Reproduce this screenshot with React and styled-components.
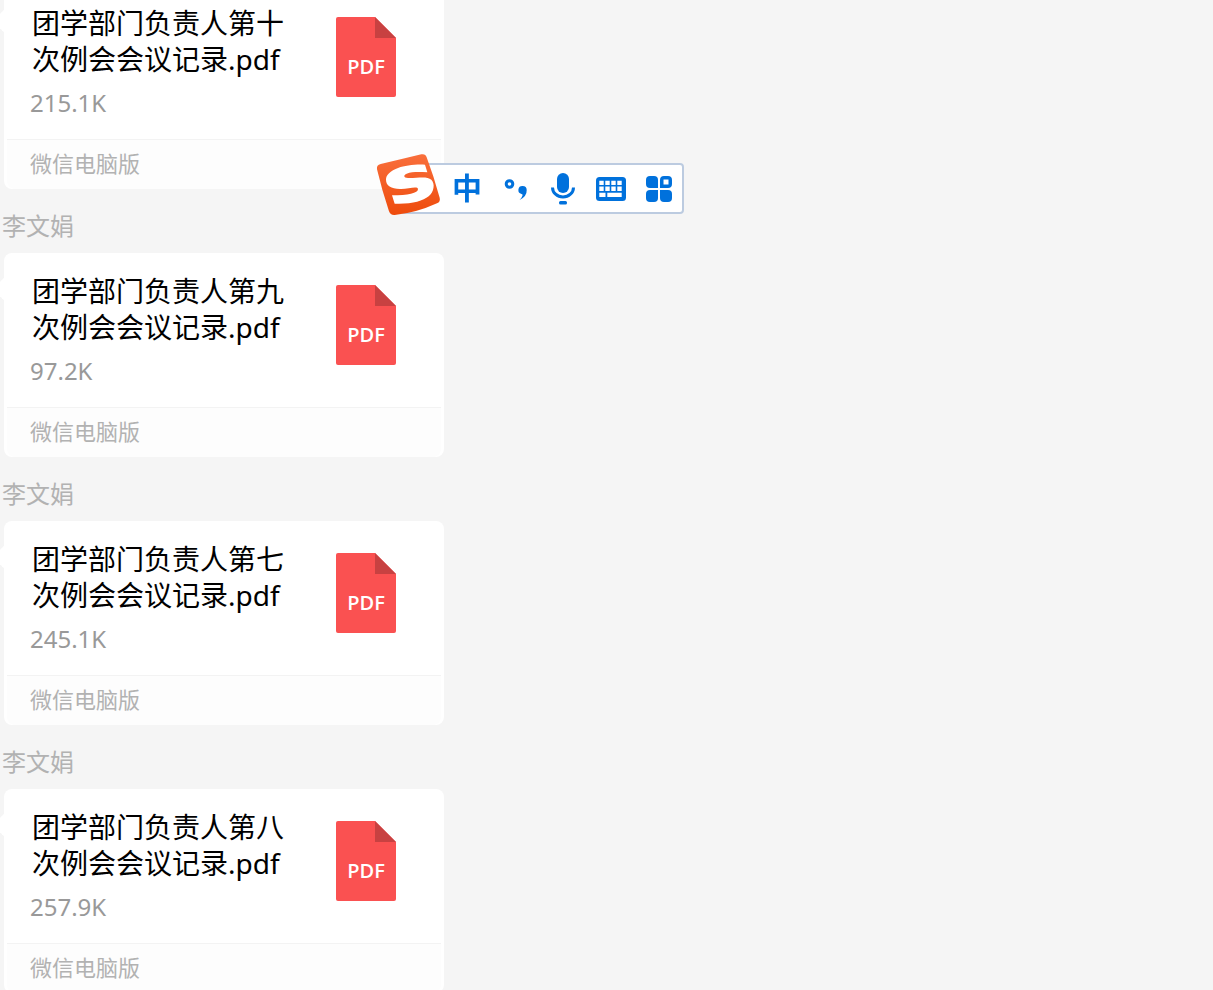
import React from "react";
import styled, { createGlobalStyle } from "styled-components";

const files = [
  { id: 10, title: "团学部门负责人第十次例会会议记录.pdf", size: "215.1K" },
  { id: 9, title: "团学部门负责人第九次例会会议记录.pdf", size: "97.2K" },
  { id: 7, title: "团学部门负责人第七次例会会议记录.pdf", size: "245.1K" },
  { id: 8, title: "团学部门负责人第八次例会会议记录.pdf", size: "257.9K" },
];

function PdfIcon() {
  return (
    <svg width="60" height="80" viewBox="0 0 60 80" aria-hidden="true">
      <path
        d="M2 0H39L60 21V78a2 2 0 0 1-2 2H2a2 2 0 0 1-2-2V2a2 2 0 0 1 2-2Z"
        fill="#fa5151"
      />
      <path d="M39 0L60 21H39Z" fill="#c84141" />
      <PdfLabel x="30" y="57" textAnchor="middle">
        PDF
      </PdfLabel>
    </svg>
  );
}

function FileMessage({ file }) {
  return (
    <Message>
      <Sender>李文娟</Sender>
      <Card href={`#file-${file.id}`}>
        <CardBody>
          <div>
            <Title>{file.title}</Title>
            <Size>{file.size}</Size>
          </div>
          <PdfIcon />
        </CardBody>
        <Source>微信电脑版</Source>
      </Card>
    </Message>
  );
}

function SogouLogo() {
  return (
    <Logo viewBox="0 0 195 189" aria-hidden="true">
      <defs>
        <linearGradient id="sogou" x1="0" y1="0" x2="0" y2="1">
          <stop offset="0" stopColor="#f96f3c" />
          <stop offset="1" stopColor="#ee4b0c" />
        </linearGradient>
      </defs>
      <path
        d="M14 33Q75 19 136 4Q148 1 152 13Q174 72 191 134Q194 146 183 151Q120 180 56 186Q43 187 39 175Q18 113 3 49Q1 36 14 33Z"
        fill="url(#sogou)"
      />
      <path
        d="M147 35C120 33 85 38 68 44C42 53 30 66 30 80C30 98 45 107 72 108C95 109 124 98 126 108C127 120 95 127 48 127L56 152C105 154 140 145 158 130C174 116 178 92 166 80C152 68 122 76 96 75C82 74 82 66 92 62C108 56 130 57 154 58Z"
        fill="#fff"
      />
    </Logo>
  );
}

function InputBar() {
  return (
    <Bar>
      <SogouLogo />
      <Tool aria-label="中文">中</Tool>
      <Tool aria-label="标点">
        <svg width="26" height="32" viewBox="0 0 26 32">
          <circle cx="7.5" cy="11" r="3.3" fill="none" stroke="#0071dc" strokeWidth="3" />
          <path
            d="M20.500 13a4 4 0 0 0-1 7.900q1.500.3 1 1.500q-.8 2.600-3 4.600q7.500-3.500 7.200-10a4.100 4.100 0 0 0-4.200-4Z"
            fill="#0071dc"
          />
        </svg>
      </Tool>
      <Tool aria-label="语音">
        <svg width="26" height="32" viewBox="0 0 26 32">
          <rect x="7" y="0" width="12" height="20" rx="6" fill="#0071dc" />
          <path
            d="M2.500 14.500a10.500 9.500 0 0 0 21 0"
            fill="none"
            stroke="#0071dc"
            strokeWidth="3"
          />
          <rect x="9" y="28" width="8" height="3.5" rx="1.5" fill="#0071dc" />
        </svg>
      </Tool>
      <Tool aria-label="键盘">
        <svg width="30" height="24" viewBox="0 0 30 24">
          <rect width="30" height="24" rx="3.5" fill="#0071dc" />
          <path
            d="M3.300 3.700h4.400v4.400H3.300zM9.300 3.700h4.400v4.400H9.300zM15.300 3.700h4.400v4.400h-4.400zM21.300 3.700h4.400v4.400h-4.400zM3.300 9.500h4.400v4.500H3.300zM9.300 9.500h4.400v4.500H9.300zM15.300 9.500h4.400v4.500h-4.400zM21.300 9.500h4.400v4.500h-4.400zM3.300 15.700h6.200V20H3.300zM11.300 15.700h14.400V20H11.300z"
            fill="#fff"
          />
        </svg>
      </Tool>
      <Tool aria-label="工具箱">
        <svg width="26" height="26" viewBox="0 0 26 26" fill="#0071dc">
          <path d="M4 0h4a4 4 0 0 1 4 4v8H4a4 4 0 0 1-4-4V4a4 4 0 0 1 4-4Z" />
          <path
            fillRule="evenodd"
            d="M18 0h4a4 4 0 0 1 4 4v4a4 4 0 0 1-4 4h-8V4a4 4 0 0 1 4-4ZM17.500 3.500V8.500h5V3.500Z"
          />
          <path d="M4 14h8v8a4 4 0 0 1-4 4H4a4 4 0 0 1-4-4v-4a4 4 0 0 1 4-4Z" />
          <path d="M14 14h8a4 4 0 0 1 4 4v4a4 4 0 0 1-4 4h-4a4 4 0 0 1-4-4Z" />
        </svg>
      </Tool>
    </Bar>
  );
}

function App() {
  return (
    <>
      <GlobalStyle />
      <Chat>
        {files.map((file) => (
          <FileMessage key={file.id} file={file} />
        ))}
      </Chat>
      <InputBar />
    </>
  );
}

export default App;

const GlobalStyle = createGlobalStyle`
  * {
    box-sizing: border-box;
  }
  body {
    margin: 0;
    overflow: hidden;
    background: #f5f5f5;
    font-family: "Noto Sans", "Noto Sans CJK SC", sans-serif;
  }
`;

/* the newest message runs slightly past the bottom of the window */
const Chat = styled.main`
  display: flex;
  flex-direction: column;
  justify-content: flex-end;
  height: calc(100vh + 3px);
  overflow: hidden;
`;

const Message = styled.section`
  flex: none;
`;

const Sender = styled.div`
  height: 64px;
  padding: 19px 2px 0;
  font-size: 24px;
  line-height: 36px;
  color: #b2b2b2;
`;

const Card = styled.a`
  position: relative;
  display: block;
  max-width: 440px;
  margin-left: 4px;
  border-radius: 8px;
  background: #fff;
  color: #000;
  text-decoration: none;

  &::before {
    content: "";
    position: absolute;
    top: 28px;
    left: -8px;
    width: 16px;
    height: 16px;
    background: #fff;
    transform: rotate(45deg);
  }
`;

const CardBody = styled.div`
  display: flex;
  justify-content: space-between;
  align-items: flex-start;
  height: 154px;
  padding: 20px 48px 0 26px;

  svg {
    flex: none;
    margin-top: 12px;
  }
`;

const Title = styled.div`
  width: 260px;
  padding-left: 2px;
  font-size: 28px;
  line-height: 36px;
`;

const Size = styled.div`
  margin-top: 8px;
  font-size: 24px;
  line-height: 36px;
  color: #999;
`;

const Source = styled.div`
  height: 50px;
  margin: 0 3px;
  padding: 0 23px;
  border-top: 1px solid #f3f3f3;
  border-radius: 0 0 8px 8px;
  background: #fdfdfd;
  font-size: 22px;
  line-height: 46px;
  color: #b2b2b2;
`;

const PdfLabel = styled.text`
  font-family: "Open Sans", "Noto Sans", sans-serif;
  font-size: 20px;
  font-weight: 600;
  fill: #fff;
`;

const Bar = styled.div`
  position: fixed;
  top: 163px;
  left: 400px;
  display: flex;
  align-items: center;
  gap: 8px;
  height: 51px;
  padding: 0 3px 0 45px;
  border: 2px solid #bccbe0;
  border-radius: 4px;
  background: #fff;
`;

const Logo = styled.svg`
  position: absolute;
  top: -12px;
  left: -26px;
  width: 65px;
  height: 63px;
`;

const Tool = styled.button`
  display: flex;
  align-items: center;
  justify-content: center;
  width: 40px;
  height: 40px;
  padding: 0;
  border: 0;
  background: none;
  color: #0071dc;
  font-family: "Noto Sans CJK SC", sans-serif;
  font-size: 30px;
  font-weight: 700;
  line-height: 36px;

  &:first-of-type {
    padding-bottom: 5px;
  }
`;
